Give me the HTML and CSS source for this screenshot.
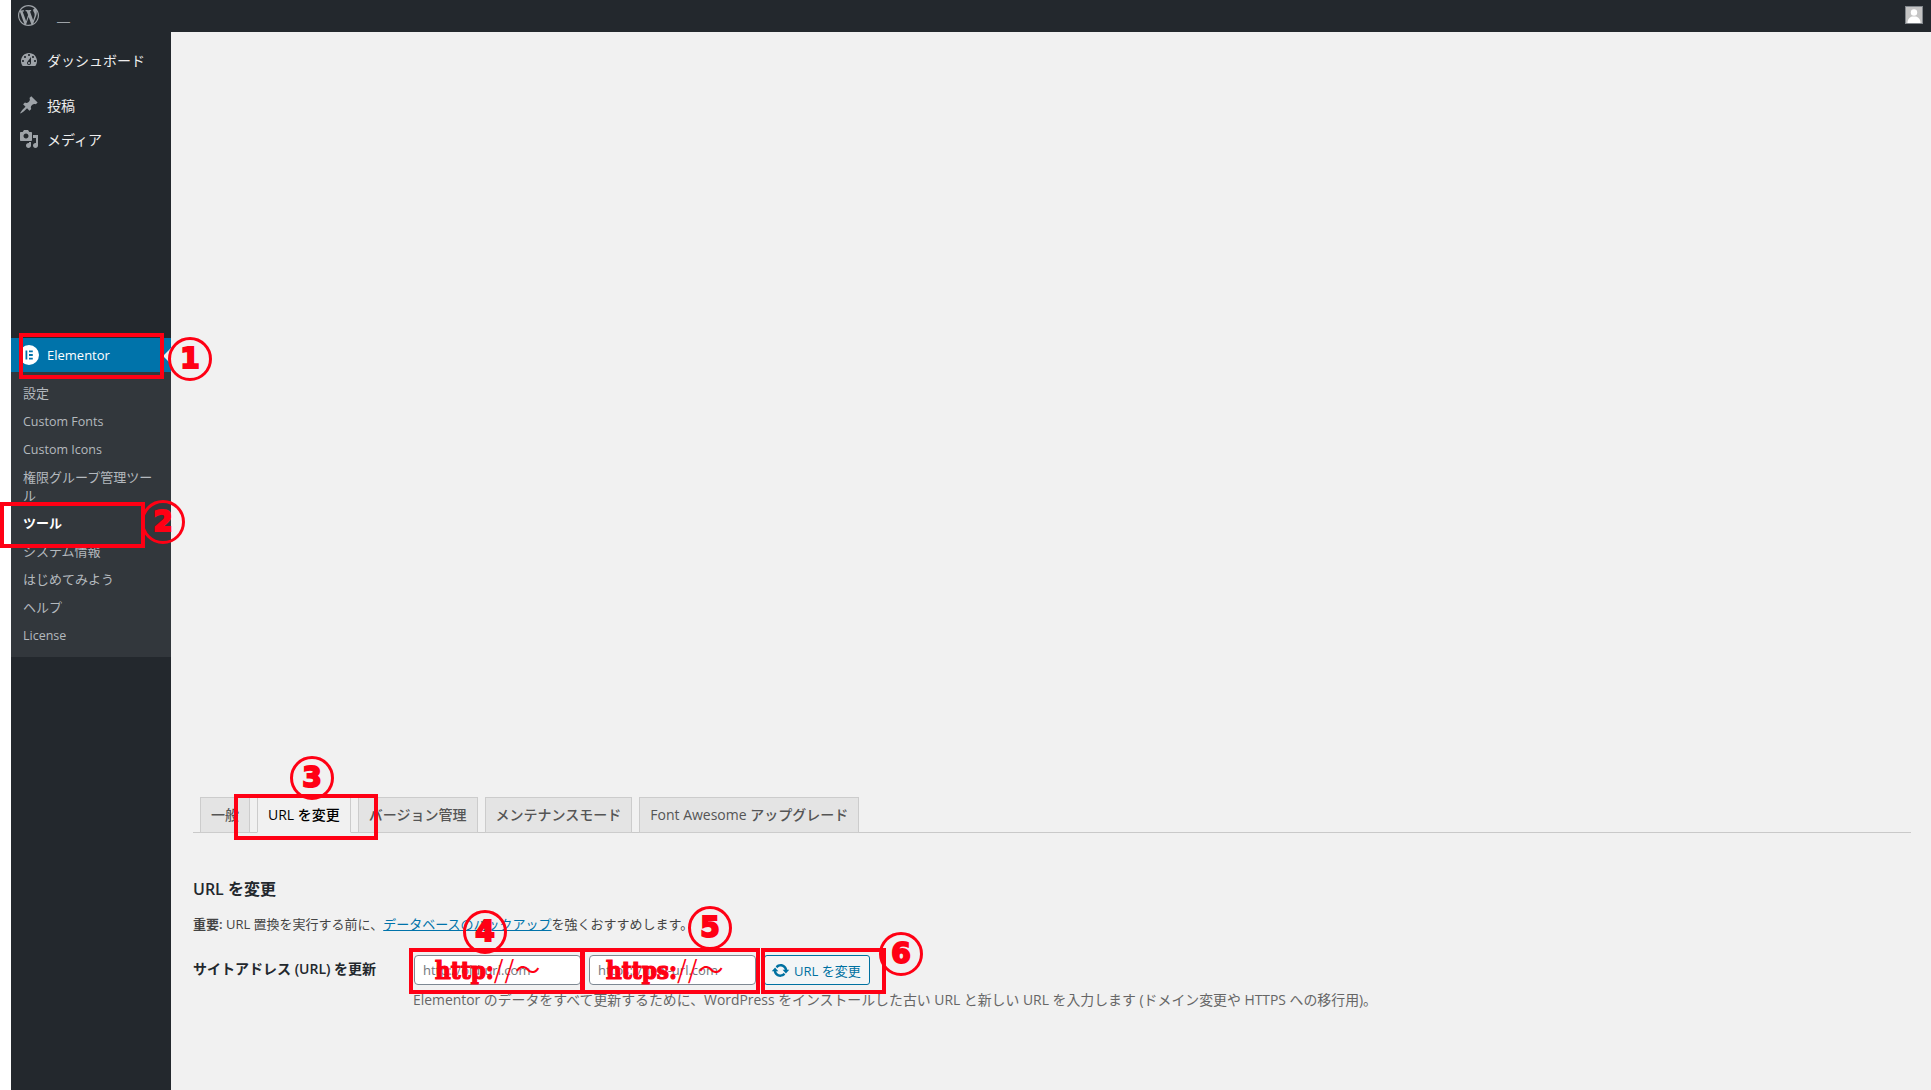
FILE: index.html
```html
<!DOCTYPE html>
<html lang="ja">
<head>
<meta charset="utf-8">
<title>Elementor ツール</title>
<link rel="stylesheet" href="styles.css">
</head>
<body>
<div class="page">
  <header class="adminbar">
    <svg class="wp-logo" viewBox="0 0 20 20"><path d="M20 10c0-5.510-4.490-10-10-10C4.480 0 0 4.490 0 10c0 5.520 4.480 10 10 10 5.510 0 10-4.480 10-10zM7.780 15.370L4.370 6.220c.55-.02 1.170-.08 1.170-.08.5-.06.44-1.130-.06-1.110 0 0-1.450.11-2.370.11-.18 0-.37 0-.58-.01C4.120 2.690 6.870 1.110 10 1.110c2.330 0 4.450.87 6.050 2.340-.68-.11-1.650.39-1.650 1.580 0 .74.45 1.360.9 2.100.35.61.55 1.360.55 2.460 0 1.490-1.400 5-1.400 5l-3.030-8.370c.54-.02.82-.17.82-.17.5-.05.44-1.250-.06-1.220 0 0-1.440.12-2.380.12-.87 0-2.330-.12-2.330-.12-.5-.03-.56 1.200-.06 1.220l.92.08 1.260 3.410zM17.410 10c.24-.64.74-1.870.43-4.250.7 1.290 1.050 2.710 1.050 4.250 0 3.290-1.730 6.240-4.400 7.780.97-2.590 1.940-5.200 2.920-7.780zM6.100 18.090C3.120 16.650 1.110 13.530 1.110 10c0-1.300.23-2.480.72-3.590C3.250 10.300 4.670 14.200 6.100 18.090zm4.030-6.630l2.580 6.980c-.86.29-1.760.45-2.710.45-.79 0-1.570-.11-2.290-.33.81-2.380 1.620-4.740 2.420-7.100z"/></svg>
    <span class="site-name">—</span>
    <span class="avatar"><svg viewBox="0 0 16 16"><circle cx="8" cy="5.500" r="3.200"/><path d="M1.500 16c0-4 2.500-6 4.500-6.500h4c2 .5 4.500 2.500 4.500 6.500z"/></svg></span>
  </header>
  <div class="workspace">
    <nav class="sidebar">
      <a class="menu-item">
        <svg class="menu-icon" viewBox="0 0 20 20"><path d="M3.760 16h12.480c1.100-1.370 1.760-3.110 1.760-5 0-4.420-3.580-8-8-8s-8 3.580-8 8c0 1.890.66 3.630 1.760 5zM10 4c.55 0 1 .45 1 1s-.45 1-1 1-1-.45-1-1 .45-1 1-1zM6 6c.55 0 1 .45 1 1s-.45 1-1 1-1-.45-1-1 .45-1 1-1zm8 0c.55 0 1 .45 1 1s-.45 1-1 1-1-.45-1-1 .45-1 1-1zm-5.370 5.550L12 7v6c0 1.100-.9 2-2 2s-2-.9-2-2c0-.57.24-1.080.63-1.450zM4 10c.55 0 1 .45 1 1s-.45 1-1 1-1-.45-1-1 .45-1 1-1zm12 0c.55 0 1 .45 1 1s-.45 1-1 1-1-.45-1-1 .45-1 1-1zm-5 3c0-.55-.45-1-1-1s-1 .45-1 1 .45 1 1 1 1-.45 1-1z"/></svg>
        ダッシュボード
      </a>
      <a class="menu-item menu-posts">
        <svg class="menu-icon" viewBox="0 0 20 20"><path d="M10.440 3.020l1.820-1.820 6.360 6.350-1.830 1.820c-1.050-.68-2.480-.57-3.410.36l-.75.75c-.92.93-1.040 2.350-.35 3.410l-1.830 1.820-2.410-2.410-2.800 2.790c-.42.42-3.380 2.710-3.800 2.290s1.860-3.390 2.280-3.810l2.790-2.790L4.100 9.360l1.830-1.820c1.050.69 2.480.57 3.400-.36l.75-.75c.93-.92 1.050-2.350.36-3.410z"/></svg>
        投稿
      </a>
      <a class="menu-item">
        <svg class="menu-icon" viewBox="0 0 20 20"><path d="M13 11V4c0-.55-.45-1-1-1h-1.670L9 1H5L3.670 3H2c-.55 0-1 .45-1 1v7c0 .55.45 1 1 1h10c.55 0 1-.45 1-1zM7 4.500c1.380 0 2.500 1.120 2.500 2.500S8.380 9.500 7 9.500 4.500 8.380 4.500 7 5.620 4.500 7 4.500zM14 6h5v10.500c0 1.380-1.120 2.500-2.500 2.500S14 17.880 14 16.500s1.120-2.500 2.500-2.500c.17 0 .34.020.5.050V9h-3V6zm-4 8.050V13h2v3.500c0 1.380-1.120 2.500-2.500 2.500S7 17.880 7 16.500 8.120 14 9.500 14c.17 0 .34.020.5.050z"/></svg>
        メディア
      </a>
      <a class="menu-item menu-current">
        <svg class="menu-icon" viewBox="0 0 20 20"><path fill-rule="evenodd" d="M10 0a10 10 0 1 0 0 20a10 10 0 0 0 0-20zM6.500 5.500h1.800v9H6.500zM10 5.500h3.800v1.800H10zM10 9.100h3.800v1.800H10zM10 12.700h3.800v1.800H10z"/></svg>
        Elementor
      </a>
      <ul class="submenu">
        <li>設定</li>
        <li class="latin">Custom Fonts</li>
        <li class="latin">Custom Icons</li>
        <li>権限グループ管理ツール</li>
        <li class="sub-current">ツール</li>
        <li>システム情報</li>
        <li>はじめてみよう</li>
        <li>ヘルプ</li>
        <li class="latin">License</li>
      </ul>
    </nav>
    <main class="content">
      <div class="tabs">
        <a class="tab">一般</a>
        <a class="tab tab-active">URL を変更</a>
        <a class="tab">バージョン管理</a>
        <a class="tab">メンテナンスモード</a>
        <a class="tab">Font Awesome アップグレード</a>
      </div>
      <h2 class="section-title">URL を変更</h2>
      <p class="notice"><strong>重要:</strong> URL 置換を実行する前に、<a class="link">データベースのバックアップ</a>を強くおすすめします。</p>
      <div class="form-row">
        <div class="form-label">サイトアドレス (URL) を更新</div>
        <div class="form-field">
          <div class="controls">
            <input class="url-input" type="text" placeholder="http://old-url.com">
            <input class="url-input" type="text" placeholder="https://new-url.com">
            <button class="update-btn" type="button">
              <svg viewBox="0 0 20 20"><path d="M10.200 3.280c3.530 0 6.430 2.610 6.920 6h2.080l-3.500 4-3.500-4h2.320c-.45-1.970-2.210-3.450-4.320-3.450-1.450 0-2.730.71-3.540 1.780L4.950 5.660C6.230 4.200 8.110 3.280 10.200 3.280zm-.4 13.440c-3.520 0-6.430-2.610-6.920-6H.8l3.500-4c1.170 1.330 2.330 2.670 3.500 4H5.480c.45 1.970 2.210 3.450 4.320 3.450 1.450 0 2.730-.71 3.540-1.780l1.710 1.950c-1.280 1.460-3.150 2.380-5.250 2.380z"/></svg>
              URL を変更
            </button>
          </div>
          <p class="description">Elementor のデータをすべて更新するために、WordPress をインストールした古い URL と新しい URL を入力します (ドメイン変更や HTTPS への移行用)。</p>
        </div>
      </div>
    </main>
  </div>
</div>

<div class="mark box-1"></div>
<div class="mark box-2"></div>
<div class="mark box-3"></div>
<div class="mark box-4"></div>
<div class="mark box-5"></div>
<div class="mark box-6"></div>
<div class="num num-1">1</div>
<div class="num num-2">2</div>
<div class="num num-3">3</div>
<div class="num num-4">4</div>
<div class="num num-5">5</div>
<div class="num num-6">6</div>
<div class="url-note note-old"><span class="note-heavy">http:</span><span class="note-thin">//〜</span></div>
<div class="url-note note-new"><span class="note-heavy">https:</span><span class="note-thin">//〜</span></div>
</body>
</html>
```
FILE: styles.css
```css
* { box-sizing: border-box; }
html, body { margin: 0; padding: 0; background: #fff; }
body {
  position: relative;
  width: 1931px;
  height: 1090px;
  overflow: hidden;
  font-family: "Open Sans", "Noto Sans CJK JP", sans-serif;
  font-size: 13px;
  color: #3c434a;
}
.page { margin-left: 11px; height: 1090px; display: flex; flex-direction: column; }

.adminbar { height: 32px; background: #23282d; display: flex; align-items: center; flex: none; }
.wp-logo { width: 21px; height: 21px; margin-left: 7px; fill: #9ea3a8; flex: none; margin-top: -2px; }
.site-name { color: #9ea3a8; font-size: 13px; line-height: 16px; margin-left: 18px; margin-top: 11px; font-family: "Liberation Sans", sans-serif; }
.avatar { margin-left: auto; margin-right: 8px; width: 18px; height: 18px; border: 1px solid #82878c; background: #c4c4c4; display: flex; overflow: hidden; margin-top: -2px; }
.avatar svg { width: 16px; height: 16px; fill: #fff; }

.workspace { flex: 1; display: flex; min-height: 0; }

.sidebar { width: 160px; flex: none; background: #23282d; padding-top: 11px; }
.menu-item { height: 34px; display: flex; align-items: center; color: #eee; font-size: 14px; padding-left: 36px; position: relative; }
.menu-icon { position: absolute; left: 8px; top: 7px; width: 20px; height: 20px; fill: #9ea3a8; }
.menu-posts { margin-top: 11px; }
.menu-current { background: #0073aa; color: #fff; margin-top: 182px; font-size: 13px; }
.menu-current .menu-icon { fill: #fff; }
.menu-current::after {
  content: "";
  position: absolute;
  right: 0;
  top: 10px;
  border: 8px solid transparent;
  border-right-color: #f0f0f1;
  border-left-width: 0;
}
.submenu { list-style: none; margin: 0; padding: 7px 0 8px; background: #32373c; color: #b4b9be; }
.submenu li { padding: 5px 12px; line-height: 18px; font-size: 13px; }
.submenu .latin { font-size: 12.500px; padding-top: 6px; padding-bottom: 4px; }
.submenu .sub-current { color: #fff; font-weight: 700; }

.content { flex: 1; background: #f1f1f1; padding: 765px 20px 0 22px; color: #444; }

.tabs { display: flex; gap: 7px; height: 36px; border-bottom: 1px solid #c9c9c9; padding-left: 7px; }
.tab { height: 36px; padding: 0 10px 2px; display: flex; align-items: center; font-size: 14px; font-weight: 500; color: #555; background: #e4e4e4; border: 1px solid #ccc; white-space: nowrap; }
.tab-active { background: #f1f1f1; border-bottom-color: #f1f1f1; color: #000; }

.section-title { margin: 0; padding-top: 44px; font-size: 16px; font-weight: 600; line-height: 24px; color: #23282d; }
.notice { margin: 0; padding-top: 13px; line-height: 21px; font-size: 13px; }
.notice strong { font-weight: 600; }
.link { color: #0073aa; text-decoration: underline; }

.form-row { display: flex; padding-top: 20px; }
.form-label { width: 221px; flex: none; font-weight: 600; font-size: 14px; line-height: 28px; color: #23282d; }
.controls { display: flex; gap: 8px; align-items: center; }
.url-input { width: 167px; height: 30px; padding: 0 8px; border: 1px solid #7e8993; border-radius: 4px; background: #fff; font: 13px "Open Sans", sans-serif; color: #32373c; }
.url-input::placeholder { color: #72777c; opacity: 1; }
.update-btn { width: 106px; height: 30px; border: 1px solid #0071a1; border-radius: 3px; background: #f3f5f6; color: #0071a1; font: 13px "Open Sans", "Noto Sans CJK JP", sans-serif; display: flex; align-items: center; gap: 4px; padding: 0 0 0 6px; white-space: nowrap; }
.update-btn svg { width: 19px; height: 19px; fill: #0071a1; flex: none; }
.description { margin: 5px 0 0 -1px; font-size: 13.900px; line-height: 20px; color: #666; white-space: nowrap; }

/* Red annotations painted over the screenshot */
.mark { position: absolute; border: 4px solid #ff0014; }
.box-1 { left: 19px; top: 333px; width: 145px; height: 46px; }
.box-2 { left: 0; top: 502px; width: 145px; height: 46px; }
.box-3 { left: 234px; top: 794px; width: 144px; height: 46px; }
.box-4 { left: 409px; top: 948px; width: 175px; height: 46px; }
.box-5 { left: 581px; top: 948px; width: 179px; height: 46px; }
.box-6 { left: 761px; top: 948px; width: 125px; height: 46px; }

.num {
  position: absolute;
  width: 44px;
  height: 44px;
  border: 3px solid #ff0014;
  border-radius: 50%;
  display: flex;
  align-items: center;
  justify-content: center;
  color: #ff0014;
  font: 700 28px/1 "DejaVu Sans", sans-serif;
  -webkit-text-stroke: 2px #ff0014;
}
.num-1 { left: 168px; top: 337px; }
.num-2 { left: 141px; top: 500px; }
.num-3 { left: 290px; top: 756px; }
.num-4 { left: 463px; top: 910px; }
.num-5 { left: 688px; top: 906px; }
.num-6 { left: 879px; top: 932px; }

.url-note {
  position: absolute;
  top: 953px;
  color: #ff0014;
  line-height: 30px;
  white-space: nowrap;
}
.note-heavy { font: 700 24px/30px "DejaVu Serif", serif; font-stretch: condensed; letter-spacing: 0; -webkit-text-stroke: 1.200px #ff0014; }
.note-thin { font: 400 25px/30px "Noto Sans CJK JP", sans-serif; letter-spacing: 1px; }
.note-old { left: 435px; }
.note-new { left: 606px; }
```
